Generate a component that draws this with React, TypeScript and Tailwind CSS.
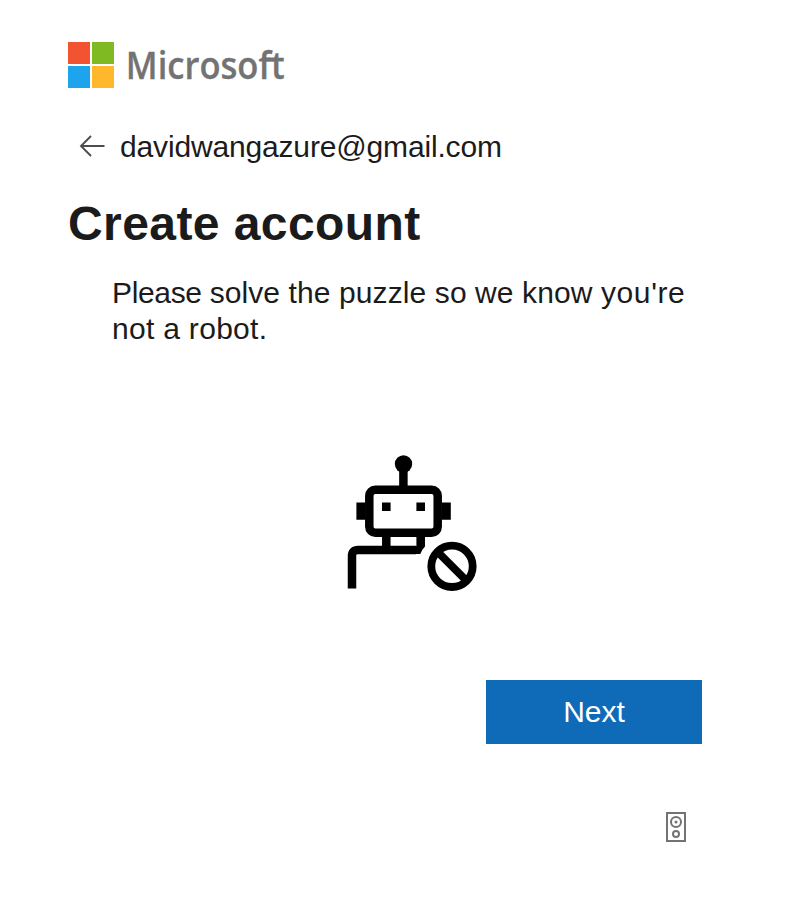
function MicrosoftLogo() {
  return (
    <div className="flex h-[46px] items-center">
      <div className="grid h-[46px] w-[46px] grid-cols-2 gap-[2px]">
        <div className="bg-[#f25330]" />
        <div className="bg-[#80ba22]" />
        <div className="bg-[#1ea4ec]" />
        <div className="bg-[#ffb82c]" />
      </div>
      <svg className="ml-[6px] h-[60px] w-[180px]" viewBox="120 35 180 60" fill="#737373" aria-label="Microsoft">
        <text
          x="125.8"
          y="79"
          textLength="158.8"
          lengthAdjust="spacingAndGlyphs"
          stroke="#737373"
          strokeWidth="0.3"
          className="font-['Open_Sans',sans-serif] text-[38px] font-semibold"
        >
          Microsoft
        </text>
        <path d="M262 57.5h14v4h-14z" />
      </svg>
    </div>
  );
}

function BackArrow() {
  return (
    <svg className="h-[24px] w-[28px]" viewBox="78 134 28 24" fill="none" stroke="#4d4d4d" strokeWidth="1.9">
      <path d="M104.5 146H81M91 136l-10 10 10 10" />
    </svg>
  );
}

function RobotBlocked() {
  return (
    <svg className="h-[140px] w-[134px]" viewBox="345 453 134 140" fill="none" stroke="#000" strokeWidth="8.5">
      <circle cx="403.5" cy="464" r="8.7" fill="#000" stroke="none" />
      <path d="M403.4 464v24" />
      <rect x="369.3" y="489.8" width="68.4" height="43" rx="6" />
      <path d="M356.4 502.5h9v17.3h-9zM441.8 502.5h9v17.3h-9zM382 502.5h8.6v8.6H382zM416.4 502.5h8.6v8.6h-8.6z" fill="#000" stroke="none" />
      <path d="M386.3 534v14" />
      <path d="M416.4 536h8.6v10.5q-3 3-4.7 7.5h-8v-8h4.1z" fill="#000" stroke="none" />
      <path d="M352 588.4V556q0-6 6-6h58" />
      <circle cx="452" cy="566.3" r="20.7" strokeWidth="7.8" />
      <path d="m437.5 551.8 29 29" strokeWidth="7.8" />
    </svg>
  );
}

function AudioIcon() {
  return (
    <svg className="h-[30px] w-[20px]" viewBox="0 0 20 30" fill="none" stroke="#737373" strokeWidth="2">
      <rect x="1" y="1" width="18" height="28" />
      <circle cx="10" cy="10" r="5" />
      <circle cx="10" cy="10" r="1.5" fill="#737373" stroke="none" />
      <circle cx="10" cy="22" r="3" />
    </svg>
  );
}

export default function App() {
  return (
    <main className="flex h-[900px] w-[794px] flex-col bg-white pr-[92px] pl-[68px] pt-[42px] font-['Liberation_Sans',Arial,sans-serif] text-[#1b1b1b]">
      <MicrosoftLogo />
      <div className="mt-[40px] flex h-[36px] items-center pl-[10px]">
        <BackArrow />
        <span className="ml-[14px] pt-[2px] text-[30px] leading-[36px] tracking-[-0.16px]">davidwangazure@gmail.com</span>
      </div>
      <h1 className="mt-[32px] text-[48px] leading-[56px] font-bold tracking-[0.42px] whitespace-nowrap">Create account</h1>
      <p className="mt-[23px] ml-[44px] w-[600px] text-[30px] leading-[36px] whitespace-nowrap">
        <span className="tracking-[-0.35px]">Please </span>
        <span className="tracking-[0.1px]">solve the puzzle so we know </span>
        <span className="tracking-[0.6px]">you're</span>
        <br />
        <span className="tracking-[0.3px]">not a robot.</span>
      </p>
      <div className="mt-[106px] flex h-[140px] pl-[277px]">
        <RobotBlocked />
      </div>
      <div className="mt-[87px] flex justify-end">
        <button className="h-[64px] w-[216px] bg-[#0f6ab8] text-[30px] leading-[64px] text-white">Next</button>
      </div>
      <div className="mt-[68px] flex justify-end pr-[16px]">
        <AudioIcon />
      </div>
    </main>
  );
}
